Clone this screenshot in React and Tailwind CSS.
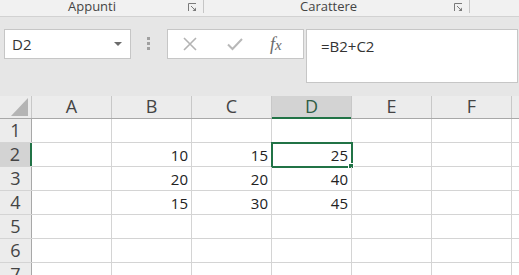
import React from "react";

const Launcher = () => (
  <svg width="9" height="9" viewBox="0 0 9 9" className="block">
    <path d="M0.5 8 V0.5 H8" fill="none" stroke="#7a7a7a" strokeWidth="1" />
    <path d="M3 3 L7.5 7.5" stroke="#7a7a7a" strokeWidth="1" />
    <path d="M4.5 8 H8 V4.5 Z" fill="#7a7a7a" />
  </svg>
);

const cols = ["A", "B", "C", "D", "E", "F"];
const data = {
  2: { B: "10", C: "15", D: "25" },
  3: { B: "20", C: "20", D: "40" },
  4: { B: "15", C: "30", D: "45" },
};

export default function App() {
  return (
    <div className="w-[519px] h-[275px] overflow-hidden bg-[#e6e6e6] font-['Open_Sans',sans-serif] text-[#333]">
      {/* ribbon labels */}
      <div className="h-[17px] bg-[#f1f1f1] border-b border-[#d2d2d2] flex items-start">
        <div className="w-[204px] h-[13px] border-r border-[#c6c6c6] flex items-start">
          <span className="ml-[68px] text-[13px] leading-[13px] text-[#444]">Appunti</span>
          <span className="ml-auto mr-[6px] mt-[3px]"><Launcher /></span>
        </div>
        <div className="w-[266px] h-[13px] border-r border-[#c6c6c6] flex items-start">
          <span className="ml-[96px] text-[13px] leading-[13px] text-[#444]">Carattere</span>
          <span className="ml-auto mr-[6px] mt-[3px]"><Launcher /></span>
        </div>
      </div>

      {/* formula bar */}
      <div className="h-[79px] pt-[12px] flex items-start">
        <div className="ml-[4px] w-[127px] h-[30px] bg-white border border-[#c6c6c6] flex items-center pl-[7px] pr-[8px]">
          <span className="text-[15px] leading-none">D2</span>
          <svg width="8" height="4" viewBox="0 0 8 4" className="ml-auto">
            <path d="M0 0 H8 L4 4 Z" fill="#6b6b6b" />
          </svg>
        </div>
        <div className="ml-[16px] mt-[8px] flex flex-col gap-[2px]">
          <div className="w-[3px] h-[3px] bg-[#a0a0a0]" />
          <div className="w-[3px] h-[3px] bg-[#a0a0a0]" />
          <div className="w-[3px] h-[3px] bg-[#a0a0a0]" />
        </div>
        <div className="ml-[17px] w-[137px] h-[30px] bg-white border border-[#c6c6c6] flex items-center">
          <svg width="14" height="14" viewBox="0 0 14 14" className="ml-[15px]">
            <path d="M1 1 L13 13 M13 1 L1 13" stroke="#b3b3b3" strokeWidth="1.6" />
          </svg>
          <svg width="16" height="14" viewBox="0 0 16 14" className="ml-[30px]">
            <path d="M1 7.5 L5.5 12 L15 2" fill="none" stroke="#b8b8b8" strokeWidth="2" />
          </svg>
          <span className="ml-[27px] font-['Liberation_Serif',serif] italic text-[#6a6a6a] text-[18px] leading-none">
            f<span className="text-[15px]">x</span>
          </span>
        </div>
        <div className="ml-[2px] w-[212px] h-[54px] bg-white border border-[#c6c6c6] pl-[14px] pt-[4px]">
          <span className="text-[15px] leading-[20px] text-[#333]">=B2+C2</span>
        </div>
      </div>

      {/* grid */}
      <div className="bg-white">
        {/* header row */}
        <div className="flex h-[23px] bg-[#ececec] border-b border-[#a8a8a8]">
          <div className="w-[32px] h-[22px] border-r border-[#c8c8c8] relative">
            <svg width="17" height="18" viewBox="0 0 17 18" className="absolute left-[11px] top-[2px]">
              <path d="M17 0 V18 H0 Z" fill="#b4b4b4" />
            </svg>
          </div>
          {cols.map((c) => (
            <div
              key={c}
              className={
                c === "D"
                  ? "w-[80px] h-[22px] bg-[#d3d3d3] border-r border-[#c8c8c8] text-center text-[18px] leading-[21px] text-[#2f5d45] relative"
                  : "w-[80px] h-[22px] border-r border-[#c8c8c8] text-center text-[18px] leading-[21px] text-[#444]"
              }
            >
              {c}
              {c === "D" && <div className="absolute left-0 right-0 -bottom-[1px] h-[2px] bg-[#217346]" />}
            </div>
          ))}
          <div className="flex-1" />
        </div>
        {[1, 2, 3, 4, 5, 6, 7].map((r) => (
          <div key={r} className="flex h-[24px] border-b border-[#d4d4d4]">
            <div
              className={
                r === 2
                  ? "w-[32px] h-[23px] bg-[#d3d3d3] border-r-2 border-[#217346] text-center text-[18px] leading-[23px] text-[#444]"
                  : "w-[32px] h-[23px] bg-[#ececec] border-r border-[#a8a8a8] text-center text-[18px] leading-[23px] text-[#444]"
              }
            >
              {r}
            </div>
            {cols.map((c) => (
              <div
                key={c}
                className="w-[80px] h-[23px] border-r border-[#d4d4d4] text-right pr-[3px] text-[15px] leading-[24px] text-[#222] relative"
              >
                {data[r] && data[r][c]}
                {r === 2 && c === "D" && (
                  <>
                    <div className="absolute -left-[1px] -top-[1px] w-[82px] h-[26px] border-2 border-[#217346]" />
                    <div className="absolute -right-[3px] -bottom-[3px] w-[6px] h-[6px] bg-[#217346] border border-white" />
                  </>
                )}
              </div>
            ))}
            <div className="flex-1" />
          </div>
        ))}
      </div>
    </div>
  );
}
